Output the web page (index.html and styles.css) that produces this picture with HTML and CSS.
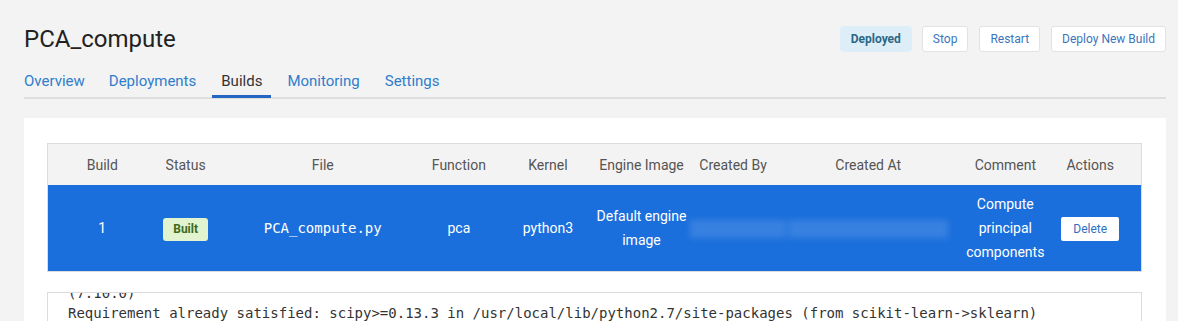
FILE: index.html
```html
<!DOCTYPE html>
<html lang="en">
<head>
<meta charset="UTF-8">
<title>PCA_compute - Builds</title>
<link rel="stylesheet" href="styles.css">
</head>
<body>

<!-- HEADER -->
<div class="top">
    <div class="model-name">PCA_compute</div>
    <div class="top-actions">
        <span class="state">Deployed</span>
        <button class="btn">Stop</button>
        <button class="btn">Restart</button>
        <button class="btn">Deploy New Build</button>
    </div>
</div>

<!-- TABS -->
<div class="tabs">
    <a href="#">Overview</a>
    <a href="#">Deployments</a>
    <a href="#" class="active">Builds</a>
    <a href="#">Monitoring</a>
    <a href="#">Settings</a>
</div>

<!-- BUILDS -->
<div class="panel">
    <table class="builds">
        <colgroup>
            <col class="c-build">
            <col class="c-status">
            <col class="c-file">
            <col class="c-func">
            <col class="c-kernel">
            <col class="c-engine">
            <col class="c-by">
            <col class="c-at">
            <col class="c-comment">
            <col class="c-actions">
        </colgroup>
        <thead>
            <tr>
                <th class="first">Build</th>
                <th>Status</th>
                <th>File</th>
                <th>Function</th>
                <th>Kernel</th>
                <th>Engine Image</th>
                <th>Created By</th>
                <th>Created At</th>
                <th>Comment</th>
                <th class="last">Actions</th>
            </tr>
        </thead>
        <tbody>
            <tr class="selected">
                <td class="first">1</td>
                <td><span class="built">Built</span></td>
                <td class="mono">PCA_compute.py</td>
                <td>pca</td>
                <td>python3</td>
                <td>Default engine image</td>
                <td><span class="redacted by"></span></td>
                <td><span class="redacted at"></span></td>
                <td>Compute principal components</td>
                <td class="last"><button class="delete">Delete</button></td>
            </tr>
        </tbody>
    </table>

    <div class="log">
<pre>(7.10.0)
Requirement already satisfied: scipy>=0.13.3 in /usr/local/lib/python2.7/site-packages (from scikit-learn->sklearn)
</pre>
    </div>
</div>

</body>
</html>
```

FILE: styles.css
```css
body {
    margin: 0;
    font-family: Roboto, "Liberation Sans", sans-serif;
    background: #f3f3f3;
    color: #222;
}

/* HEADER */
.top {
    display: flex;
    justify-content: space-between;
    align-items: center;
    padding: 23px 12px 0 24px;
}

.model-name {
    font-size: 24px;
    line-height: 32px;
    color: #222;
}

.top-actions {
    display: flex;
    align-items: center;
    gap: 11px;
}

.state {
    height: 26px;
    line-height: 26px;
    padding: 0 11px;
    margin-right: -1px;
    border-radius: 4px;
    background: #deeef8;
    color: #2b6886;
    font-size: 12px;
    font-weight: bold;
}

.btn {
    height: 26px;
    padding: 0 10px;
    border: 1px solid #e2e2e2;
    border-radius: 3px;
    background: white;
    color: #3a76bd;
    font-family: inherit;
    font-size: 12px;
}

/* TABS */
.tabs {
    display: flex;
    gap: 6px;
    margin: 12px 12px 0 24px;
    border-bottom: 2px solid #dedede;
}

.tabs a {
    padding: 5px 9px 5px;
    border-bottom: 3px solid transparent;
    margin-bottom: -1px;
    font-size: 15px;
    line-height: 18px;
    color: #2f7dcc;
    text-decoration: none;
}

.tabs a:first-child {
    padding-left: 0;
}

.tabs a:nth-child(n+3) {
    margin-left: 1px;
}

.tabs a.active {
    color: #333;
    border-bottom-color: #2566c2;
}

/* PANEL */
.panel {
    margin: 19px 12px 0 24px;
    padding: 25px 24px 0 23px;
    background: white;
}

/* TABLE */
.builds {
    width: 100%;
    border-collapse: collapse;
    table-layout: fixed;
    border: 1px solid #dcdcdc;
    font-size: 14px;
}

.c-build { width: 91px; }
.c-status { width: 94px; }
.c-file { width: 180px; }
.c-func { width: 92px; }
.c-kernel { width: 86px; }
.c-engine { width: 101px; }
.c-by { width: 82px; }
.c-at { width: 188px; }
.c-comment { width: 86px; }
.c-actions { width: 93px; }

.builds th,
.builds td {
    text-align: center;
    padding: 0 4px;
}

.builds .first { padding-left: 22px; }
.builds .last { padding-right: 13px; }

.builds th {
    height: 41px;
    background: #f3f3f3;
    color: #555;
    font-weight: normal;
}

.selected td {
    height: 86px;
    background: #1b6fdc;
    color: white;
    line-height: 24px;
}

.mono {
    font-family: "DejaVu Sans Mono", monospace;
}

.built {
    display: inline-block;
    height: 23px;
    line-height: 23px;
    padding: 0 10px;
    border-radius: 3px;
    background: #e2f4cf;
    color: #3b6a1c;
    font-size: 12px;
    font-weight: bold;
}

.delete {
    height: 24px;
    padding: 0 12px;
    border: none;
    border-radius: 2px;
    background: white;
    color: #2f6fc0;
    font-family: inherit;
    font-size: 12px;
}

/* BLURRED USER / DATE */
.redacted {
    display: inline-block;
    height: 18px;
    vertical-align: middle;
    background: rgba(255,255,255,0.13);
    filter: blur(3px);
}

.redacted.by { width: 96px; margin-left: -6px; }
.redacted.at { width: 160px; }

/* LOG */
.log {
    margin-top: 20px;
    height: 40px;
    overflow: hidden;
    border: 1px solid #dcdcdc;
    border-bottom: none;
}

.log pre {
    margin: -10px 0 0;
    padding: 0 20px;
    font-family: "DejaVu Sans Mono", monospace;
    font-size: 14px;
    line-height: 20px;
    color: #333;
}
```
